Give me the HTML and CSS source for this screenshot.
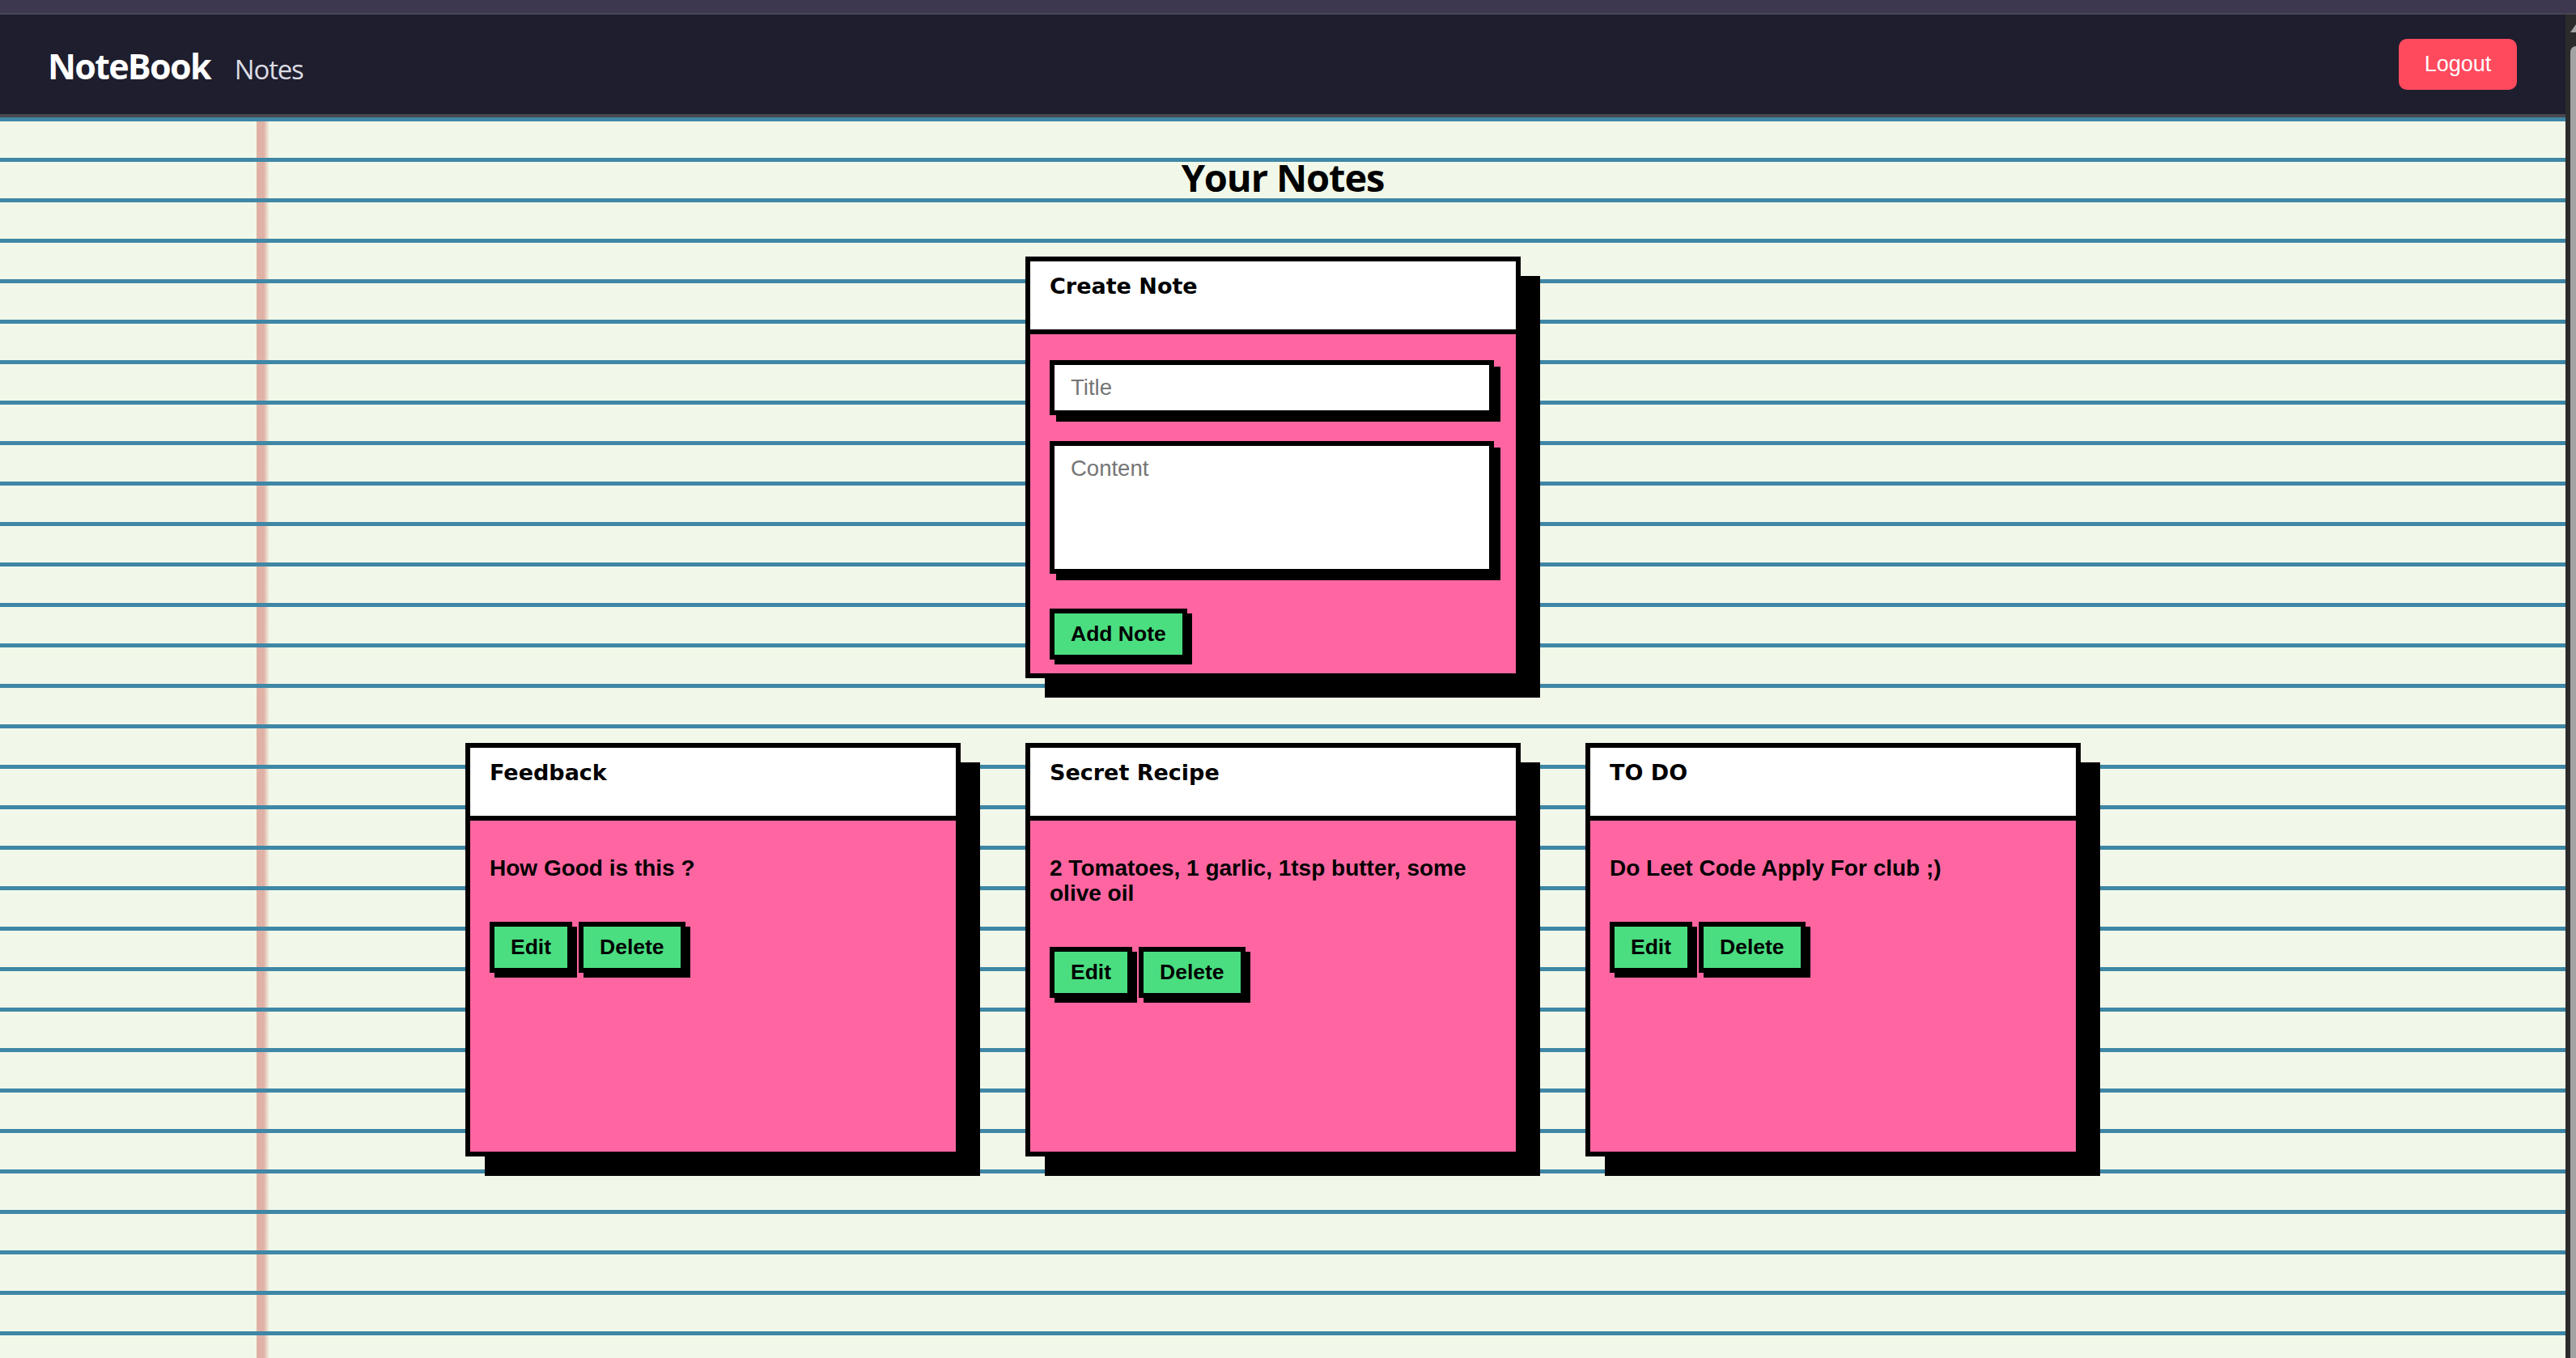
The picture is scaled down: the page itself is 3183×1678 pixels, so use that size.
FILE: index.html
```html
<!DOCTYPE html>
<html lang="en">
<head>
<meta charset="utf-8">
<title>NoteBook</title>
<link rel="stylesheet" href="styles.css">
</head>
<body>
<div class="topstrip"></div>
<div class="window">
  <div class="page">
    <nav class="navbar">
      <div class="nav-left">
        <a class="brand" href="#">NoteBook</a>
        <a class="nav-link" href="#">Notes</a>
      </div>
      <button class="logout">Logout</button>
    </nav>
    <main class="paper">
      <h1 class="page-title">Your Notes</h1>
      <div class="create-row">
        <section class="card">
          <header class="card-header"><h5 class="card-title">Create Note</h5></header>
          <form class="create-form">
            <input class="field title-input" type="text" placeholder="Title">
            <textarea class="field content-input" placeholder="Content"></textarea>
            <div class="actions"><button type="button" class="btn">Add Note</button></div>
          </form>
        </section>
      </div>
      <div class="notes-grid">
        <section class="card">
          <header class="card-header"><h5 class="card-title">Feedback</h5></header>
          <div class="note-body">
            <p class="note-text">How Good is this ?</p>
            <div class="actions"><button class="btn">Edit</button><button class="btn">Delete</button></div>
          </div>
        </section>
        <section class="card">
          <header class="card-header"><h5 class="card-title">Secret Recipe</h5></header>
          <div class="note-body">
            <p class="note-text">2 Tomatoes, 1 garlic, 1tsp butter, some olive oil</p>
            <div class="actions"><button class="btn">Edit</button><button class="btn">Delete</button></div>
          </div>
        </section>
        <section class="card">
          <header class="card-header"><h5 class="card-title">TO DO</h5></header>
          <div class="note-body">
            <p class="note-text">Do Leet Code Apply For club ;)</p>
            <div class="actions"><button class="btn">Edit</button><button class="btn">Delete</button></div>
          </div>
        </section>
      </div>
    </main>
  </div>
  <div class="scrollbar"><span class="sb-arrow"></span><span class="sb-thumb"></span></div>
</div>
</body>
</html>
```

FILE: styles.css
```css
html, body {
  margin: 0;
  height: 100%;
}
body {
  background: #1e1e2e;
  overflow: hidden;
  font-family: "Liberation Sans", Arial, sans-serif;
}
.topstrip {
  height: 16px;
  background: #3d374f;
  border-bottom: 2px solid #4b4757;
}
.window {
  display: flex;
  height: calc(100vh - 18px);
}
.page {
  flex: 1;
  min-width: 0;
  display: flex;
  flex-direction: column;
}
.navbar {
  height: 123px;
  flex-shrink: 0;
  background: #1e1e2e;
  border-bottom: 4px solid #48484e;
  display: flex;
  align-items: center;
  justify-content: space-between;
  padding: 0 60px 0 59px;
}
.nav-left {
  display: flex;
  align-items: baseline;
  gap: 30px;
  padding-top: 4px;
}
.brand {
  font-family: "Open Sans", sans-serif;
  font-weight: 700;
  font-size: 43px;
  letter-spacing: -1.7px;
  line-height: 1;
  color: #ffffff;
  text-decoration: none;
}
.nav-link {
  font-family: "Open Sans", sans-serif;
  font-weight: 400;
  font-size: 33px;
  letter-spacing: -1.2px;
  line-height: 1;
  color: #dcdce4;
  text-decoration: none;
}
.logout {
  width: 146px;
  height: 63px;
  padding: 0;
  border: none;
  border-radius: 10px;
  background: #ff4a5e;
  color: #ffffff;
  font-family: "Liberation Sans", Arial, sans-serif;
  font-size: 27px;
}
.paper {
  flex: 1;
  background:
    repeating-linear-gradient(to bottom, #3f87a6 0, #3f87a6 5px, transparent 5px, transparent 50px),
    linear-gradient(to right, transparent 317px, #e0b2a5 317px, #e0b2a5 326px, rgba(224, 178, 165, 0) 333px),
    #f1f8e9;
}
.page-title {
  margin: 42px 0 0;
  text-align: center;
  font-family: "Open Sans", sans-serif;
  font-weight: 700;
  font-size: 47px;
  line-height: 64px;
  letter-spacing: -1.1px;
  color: #000;
}
.create-row {
  display: flex;
  justify-content: center;
  padding-right: 24px;
  margin-top: 66px;
}
.notes-grid {
  display: flex;
  justify-content: center;
  gap: 80px;
  padding-right: 24px;
  margin-top: 80px;
}
.card {
  width: 600px;
  border: 6px solid #000;
  box-shadow: 24px 24px 0 #000;
  background: #ff66a1;
}
.card-header {
  box-sizing: border-box;
  height: 90px;
  background: #ffffff;
  border-bottom: 6px solid #000;
  padding: 15px 24px 0;
}
.card-title {
  margin: 0;
  font-family: "DejaVu Sans", sans-serif;
  font-weight: 700;
  font-size: 27px;
  color: #000;
}
.create-form {
  margin: 0;
  padding: 32px 24px 17px;
}
.field {
  display: block;
  width: 100%;
  box-sizing: border-box;
  border: 6px solid #000;
  box-shadow: 8px 8px 0 #000;
  background: #ffffff;
  font-family: "Liberation Sans", Arial, sans-serif;
  font-size: 27.5px;
  color: #000;
  outline: none;
  border-radius: 0;
  margin: 0;
}
.field::placeholder {
  color: #757575;
}
.title-input {
  width: calc(100% - 3px);
  height: 68px;
  padding: 0 20px;
  margin-bottom: 32px;
}
.content-input {
  width: calc(100% - 3px);
  height: 164px;
  padding: 12px 20px;
  resize: none;
  margin-bottom: 43px;
}
.actions {
  display: flex;
  gap: 8px;
}
.btn {
  background: #4ade80;
  border: 6px solid #000;
  box-shadow: 6px 6px 0 #000;
  border-radius: 0;
  padding: 10px 20px;
  font-family: "Liberation Sans", Arial, sans-serif;
  font-weight: 700;
  font-size: 26.5px;
  line-height: 31px;
  color: #000;
}
.note-body {
  box-sizing: border-box;
  height: 409px;
  padding: 43px 24px 0;
}
.note-text {
  margin: 0 0 51px;
  font-family: "Liberation Sans", Arial, sans-serif;
  font-weight: 700;
  font-size: 28px;
  line-height: 31px;
  color: #000;
}
.scrollbar {
  width: 13px;
  flex-shrink: 0;
  background: #2b2b2b;
  overflow: hidden;
  display: flex;
  flex-direction: column;
  padding-top: 12px;
  box-sizing: border-box;
}
.sb-arrow {
  width: 0;
  height: 0;
  margin-left: 6px;
  border-left: 7px solid transparent;
  border-right: 7px solid transparent;
  border-bottom: 10px solid #a3a3a3;
  flex-shrink: 0;
}
.sb-thumb {
  flex: 1;
  margin: 17px 0 0 6px;
  width: 14px;
  background: #a3a3a3;
  border-radius: 7px 0 0 0;
}
```
